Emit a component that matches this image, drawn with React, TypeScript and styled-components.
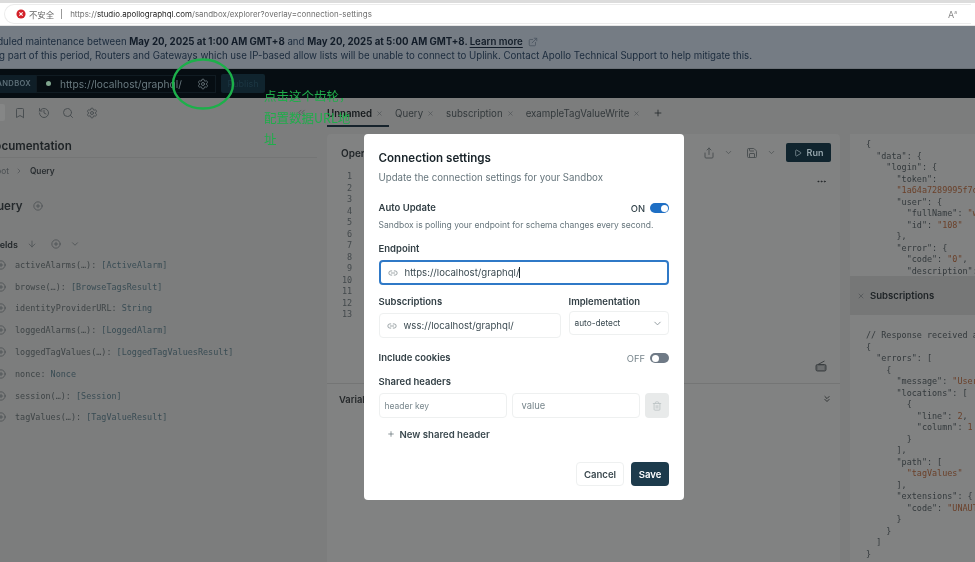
import React from "react";
import styled, { createGlobalStyle } from "styled-components";
import {
  ArrowDown,
  Bookmark,
  ChevronDown,
  ChevronRight,
  ChevronsDown,
  ChevronsLeft,
  CirclePlus,
  Ellipsis,
  ExternalLink,
  History,
  Link2,
  Play,
  Plus,
  Save,
  Search,
  Settings,
  Share,
  Trash2,
  X,
} from "lucide-react";

const GlobalStyle = createGlobalStyle`
  html, body {
    margin: 0;
    padding: 0;
    background: #7c7d7d;
    font-family: Inter, "Noto Sans CJK SC", sans-serif;
  }
  * { box-sizing: border-box; }
`;

const Page = styled.div`
  position: relative;
  width: 975px;
  height: 562px;
  overflow: hidden;
  display: flex;
  flex-direction: column;
  background: #7c7d7d;
  filter: blur(0.4px);
`;

/* browser chrome */
const BrowserBar = styled.div`
  height: 26px;
  flex: none;
  background: #ffffff;
  border-top: 3px solid #dcdcdc;
  padding: 1px 4px 0;
  border-bottom: 1px solid #e6e6e6;
`;

const UrlPill = styled.div`
  height: 20px;
  display: flex;
  align-items: center;
  padding: 0 0 0 11px;
  border: 1px solid #ececec;
  border-right: none;
  border-radius: 10px 0 0 10px;
  font-size: 7.95px;
  color: #6f6f6f;
`;

const Insecure = styled.span`
  color: #666;
  font-size: 8.4px;
  margin-left: 3px;
`;

const UrlDivider = styled.span`
  width: 1px;
  height: 10px;
  background: #999;
  margin: 0 8px 0 7px;
`;

const UrlHost = styled.span`
  color: #222;
`;

const ReadAloud = styled.span`
  margin-left: auto;
  margin-right: 14px;
  color: #888;
  font-size: 9px;
`;

const ReadAloudSmall = styled.sup`
  font-size: 5px;
`;

/* maintenance banner */
const Banner = styled.div`
  height: 43px;
  flex: none;
  background: #757c84;
  color: #1a2a3c;
  font-size: 9.7px;
  line-height: 14.2px;
  padding-top: 9px;
  white-space: nowrap;
  border-bottom: 1px solid #6a7076;
`;

const BannerLine = styled.div<{ $shift: number }>`
  display: flex;
  align-items: center;
  margin-left: ${(p) => p.$shift}px;
  b { font-weight: 700; color: #121c28; white-space: pre; }
  span { white-space: pre; }
  u { font-weight: 600; color: #121c28; text-underline-offset: 2px; }
  svg { color: #4c5660; margin-left: 5px; }
`;

/* dark header */
const DarkBar = styled.div`
  height: 29px;
  flex: none;
  background: #060d12;
  display: flex;
  align-items: center;
`;

const SandboxTag = styled.div`
  width: 36px;
  height: 18px;
  display: flex;
  align-items: center;
  justify-content: flex-end;
  overflow: hidden;
  padding-right: 5px;
  background: #0f1e27;
  color: #5d6f78;
  font-size: 7.6px;
  font-weight: 600;
  letter-spacing: 0.3px;
  white-space: nowrap;
`;

const EndpointBox = styled.div`
  width: 180px;
  height: 18px;
  display: flex;
  align-items: center;
  border: 1px solid #101b22;
  color: #6a7a80;
  font-size: 10.2px;
  padding-left: 9px;
  position: relative;
`;

const StatusDot = styled.span`
  width: 5px;
  height: 5px;
  border-radius: 50%;
  background: #7fa58e;
  margin-right: 9px;
`;

const GearSlot = styled.span`
  position: absolute;
  right: 6px;
  top: 2px;
  color: #5e6a70;
  display: flex;
`;

const PublishButton = styled.div`
  margin-left: 5px;
  width: 44px;
  height: 19px;
  background: #10242e;
  border-radius: 2px;
  color: #1c3743;
  font-size: 9px;
  display: flex;
  align-items: center;
  justify-content: center;
`;

/* workspace */
const Workspace = styled.div`
  flex: 1;
  min-height: 0;
  display: flex;
`;

const Sidebar = styled.div`
  width: 327px;
  flex: none;
  display: flex;
  flex-direction: column;
  color: #2e3436;
`;

const SideTools = styled.div`
  height: 29px;
  flex: none;
  display: flex;
  align-items: center;
  gap: 12px;
  padding-left: 14px;
  color: #4a4f52;
  position: relative;
`;

const ActiveTool = styled.span`
  position: absolute;
  left: 0;
  top: 6px;
  width: 5px;
  height: 17px;
  background: #858686;
  border-radius: 0 2px 2px 0;
`;

const CollapseIcon = styled.span`
  position: absolute;
  left: 296px;
  top: 9px;
  color: #55595b;
  display: flex;
`;

const DocsTitle = styled.div`
  height: 31px;
  margin-right: 10px;
  display: flex;
  align-items: center;
  padding-top: 7px;
  margin-left: -14px;
  font-size: 11.6px;
  font-weight: 600;
  color: #1d2225;
  border-bottom: 1px solid #747575;
`;

const Crumbs = styled.div`
  margin: 7px 0 0 -9px;
  height: 12px;
  display: flex;
  align-items: center;
  gap: 6.5px;
  font-size: 8.3px;
  color: #4a4f52;
  b { font-weight: 600; color: #2a2f32; }
`;

const QueryHead = styled.div`
  margin: 22px 0 0 -12px;
  height: 14px;
  display: flex;
  align-items: center;
  gap: 10px;
  font-size: 11.6px;
  font-weight: 600;
  color: #24292c;
  svg { color: #4d5254; }
`;

const FieldsHead = styled.div`
  margin: 25px 0 0 -8px;
  height: 12px;
  display: flex;
  align-items: center;
  gap: 9px;
  font-size: 9px;
  font-weight: 600;
  color: #24292c;
  svg { color: #4d5254; }
`;

const FieldsAdd = styled.span`
  display: flex;
  margin-left: 5px;
`;

const FieldList = styled.div`
  margin: 4px 0 0 -4px;
  display: flex;
  flex-direction: column;
`;

const FieldRow = styled.div`
  height: 21.8px;
  display: flex;
  align-items: center;
  gap: 9px;
  font-family: "DejaVu Sans Mono", monospace;
  font-size: 8.45px;
  color: #3e4446;
  white-space: pre;
  svg { color: #4d5254; flex: none; }
`;

const FieldType = styled.span`
  color: #394c54;
`;

const Center = styled.div`
  flex: 1;
  min-width: 0;
  display: flex;
  flex-direction: column;
`;

const Tabs = styled.div`
  height: 36px;
  flex: none;
  display: flex;
  align-items: flex-start;
  font-size: 9.7px;
  color: #33393c;
`;

const Tab = styled.div<{ $active?: boolean }>`
  height: 29px;
  display: flex;
  align-items: center;
  gap: 4px;
  padding: 4px 6px 0 ${(p) => (p.$active ? 0 : 6)}px;
  font-weight: ${(p) => (p.$active ? 600 : 400)};
  color: ${(p) => (p.$active ? "#15191c" : "#33393c")};
  border-bottom: 2px solid ${(p) => (p.$active ? "#16232c" : "transparent")};
  svg { color: #4a4f52; }
`;

const AddTab = styled.div`
  height: 29px;
  margin-left: 7px;
  display: flex;
  align-items: center;
  color: #25292c;
`;

const Panels = styled.div`
  flex: 1;
  min-height: 0;
  display: flex;
  gap: 10px;
`;

const Editor = styled.div`
  width: 513px;
  flex: none;
  background: #818282;
  display: flex;
  flex-direction: column;
  border-radius: 4px 4px 0 0;
`;

const EditorTop = styled.div`
  height: 250px;
  flex: none;
  display: flex;
  flex-direction: column;
  border-bottom: 1px solid #747575;
`;

const OpBar = styled.div`
  height: 37px;
  flex: none;
  display: flex;
  align-items: center;
  padding: 0 9px 0 14px;
  font-size: 10px;
  font-weight: 600;
  color: #1f2427;
`;

const OpTools = styled.div`
  margin-left: auto;
  display: flex;
  align-items: center;
  gap: 8.5px;
  color: #4c5153;
`;

const SaveSlot = styled.span`
  display: flex;
  margin-left: 5px;
`;

const RunButton = styled.div`
  margin-left: 2px;
  width: 45px;
  height: 19px;
  background: #10242e;
  border-radius: 2px;
  color: #94a4ab;
  font-size: 9px;
  font-weight: 600;
  display: flex;
  align-items: center;
  justify-content: center;
  gap: 5px;
`;

const EditorBody = styled.div`
  flex: 1;
  position: relative;
  padding-left: 15px;
`;

const LineNumbers = styled.div`
  width: 10px;
  font-family: "DejaVu Sans Mono", monospace;
  font-size: 8.45px;
  line-height: 11.5px;
  color: #43494c;
  text-align: right;
`;

const EdgeIcon = styled.span<{ $top: number; $right: number }>`
  position: absolute;
  top: ${(p) => p.$top}px;
  right: ${(p) => p.$right}px;
  color: #232628;
  display: flex;
`;

const VariablesBar = styled.div`
  position: relative;
  height: 30px;
  padding: 10px 0 0 12px;
  font-size: 9.4px;
  font-weight: 600;
  color: #26292b;
`;

const Response = styled.div`
  flex: 1;
  min-width: 0;
  display: flex;
  flex-direction: column;
  background: #818282;
`;

const CodeBlock = styled.pre<{ $height: number; $top: number }>`
  margin: 0;
  height: ${(p) => p.$height}px;
  flex: none;
  overflow: hidden;
  padding: ${(p) => p.$top}px 0 0 16px;
  font-family: "DejaVu Sans Mono", monospace;
  font-size: 8.45px;
  line-height: 11.5px;
  color: #33393c;
  em { font-style: normal; color: #6b4029; }
`;

const SubHeader = styled.div`
  height: 39px;
  flex: none;
  display: flex;
  align-items: center;
  gap: 5px;
  padding-left: 7px;
  background: #767777;
  font-size: 9.6px;
  font-weight: 600;
  color: #1e2326;
  svg { color: #4a4f52; }
`;

/* annotations over the screenshot */
const Ring = styled.svg`
  position: absolute;
  left: 170px;
  top: 57px;
`;

const Note = styled.div`
  position: absolute;
  left: 264px;
  top: 85px;
  width: 92px;
  font-size: 12.5px;
  line-height: 21.5px;
  color: #20ad4b;
  font-family: "Noto Sans CJK SC", sans-serif;
  word-break: break-all;
`;

/* dialog */
const Modal = styled.div`
  position: absolute;
  left: 364px;
  top: 134px;
  width: 320px;
  height: 366px;
  background: #ffffff;
  border-radius: 4px;
  padding: 17px 15px 0 14.5px;
  display: flex;
  flex-direction: column;
  color: #1d2a30;
`;

const ModalTitle = styled.div`
  font-size: 11.6px;
  font-weight: 600;
  line-height: 14px;
  color: #182329;
`;

const ModalSub = styled.div`
  margin-top: 6px;
  font-size: 9.7px;
  line-height: 14px;
  color: #66757c;
`;

const SpaceRow = styled.div<{ $mt: number }>`
  margin-top: ${(p) => p.$mt}px;
  height: 14px;
  display: flex;
  align-items: center;
  justify-content: space-between;
`;

const Label = styled.div<{ $mt?: number; $mb?: number }>`
  margin-top: ${(p) => p.$mt ?? 0}px;
  margin-bottom: ${(p) => p.$mb ?? 0}px;
  font-size: 9.5px;
  line-height: 12px;
  font-weight: 600;
  color: #323f45;
`;

const HelpText = styled.div`
  margin-top: 4px;
  font-size: 8.5px;
  line-height: 12px;
  color: #66757c;
  white-space: nowrap;
`;

const ToggleWrap = styled.div`
  display: flex;
  align-items: center;
  gap: 5px;
`;

const ToggleText = styled.span<{ $on: boolean }>`
  font-size: 9.4px;
  font-weight: ${(p) => (p.$on ? 500 : 400)};
  color: ${(p) => (p.$on ? "#33434b" : "#77858c")};
`;

const Toggle = styled.span<{ $on: boolean }>`
  width: 19px;
  height: 10px;
  border-radius: 5px;
  background: ${(p) => (p.$on ? "#1f6fc4" : "#6f7a86")};
  position: relative;
  &::after {
    content: "";
    position: absolute;
    top: 1.5px;
    ${(p) => (p.$on ? "right: 1.5px;" : "left: 1.5px;")}
    width: 7px;
    height: 7px;
    border-radius: 50%;
    background: #fff;
  }
`;

const Field = styled.div<{ $focus?: boolean; $w: string; $pad?: number; $h?: number }>`
  width: ${(p) => p.$w};
  height: ${(p) => p.$h ?? 25}px;
  display: flex;
  align-items: center;
  gap: 7px;
  flex: none;
  padding: 0 ${(p) => p.$pad ?? 7}px;
  background: #fff;
  border: ${(p) => (p.$focus ? "2px solid #2f79c7" : "1px solid #eef0f0")};
  border-radius: 4px;
  font-size: 9.6px;
  color: #3b4a51;
  white-space: nowrap;
  svg { color: #8b9599; flex: none; }
`;

const Caret = styled.span`
  width: 1px;
  height: 11px;
  background: #1d2a30;
  margin-left: -7px;
`;

const Placeholder = styled.span<{ $size: number }>`
  color: #78868c;
  font-size: ${(p) => p.$size}px;
`;

const TwoCols = styled.div`
  margin-top: 11px;
  display: flex;
  gap: 8px;
`;

const Col = styled.div`
  display: flex;
  flex-direction: column;
  gap: 5px;
`;

const ImplCol = styled(Col)`
  gap: 3px;
`;

const SelectText = styled.span`
  flex: 1;
  color: #3b4a51;
  font-size: 8.3px;
`;

const HeaderRow = styled.div`
  margin-top: 5px;
  display: flex;
  gap: 5px;
`;

const TrashButton = styled.div`
  width: 24px;
  height: 25px;
  background: #e8eaea;
  border-radius: 4px;
  display: flex;
  align-items: center;
  justify-content: center;
  color: #bcc3c4;
`;

const NewHeader = styled.div`
  margin-top: 10px;
  padding-left: 8px;
  height: 12px;
  display: flex;
  align-items: center;
  gap: 5px;
  font-size: 9.6px;
  font-weight: 600;
  color: #3b494f;
  svg { color: #56646a; }
`;

const Footer = styled.div`
  margin-top: 22px;
  display: flex;
  justify-content: flex-end;
  gap: 7px;
`;

const FooterButton = styled.div<{ $primary?: boolean }>`
  width: ${(p) => (p.$primary ? 38 : 48)}px;
  height: 24px;
  display: flex;
  align-items: center;
  justify-content: center;
  border-radius: 4px;
  font-size: 9.6px;
  font-weight: 600;
  background: ${(p) => (p.$primary ? "#1d3b4c" : "#fff")};
  color: ${(p) => (p.$primary ? "#ffffff" : "#3b494f")};
  border: ${(p) => (p.$primary ? "none" : "1px solid #eef0f0")};
`;

const fields: [string, string][] = [
  ["activeAlarms(…): ", "[ActiveAlarm]"],
  ["browse(…): ", "[BrowseTagsResult]"],
  ["identityProviderURL: ", "String"],
  ["loggedAlarms(…): ", "[LoggedAlarm]"],
  ["loggedTagValues(…): ", "[LoggedTagValuesResult]"],
  ["nonce: ", "Nonce"],
  ["session(…): ", "[Session]"],
  ["tagValues(…): ", "[TagValueResult]"],
];

const lineNumbers = Array.from({ length: 13 }, (_, i) => i + 1);

// little radio set with an antenna, lucide has nothing this shape
function RadioIcon() {
  return (
    <svg width="12" height="12" viewBox="0 0 12 12" fill="none" stroke="#3a3e40" strokeWidth="1">
      <rect x="1" y="4.5" width="10" height="6.5" rx="1.5" fill="#5c5f60" />
      <path d="M3 4.5L9.5 1" />
      <path d="M2.8 7h6.4M2.8 9h6.4" stroke="#8a8c8c" strokeWidth="0.7" />
    </svg>
  );
}

export default function App() {
  return (
    <Page>
      <GlobalStyle />
      <BrowserBar>
        <UrlPill>
          <svg width="10" height="10" viewBox="0 0 11 11">
            <circle cx="5.5" cy="5.5" r="5" fill="#d3222a" />
            <path d="M3.7 3.7l3.6 3.6M7.3 3.7l-3.6 3.6" stroke="#fff" strokeWidth="1.2" />
          </svg>
          <Insecure>不安全</Insecure>
          <UrlDivider />
          <span>https://</span>
          <UrlHost>studio.apollographql.com</UrlHost>
          <span>/sandbox/explorer?overlay=connection-settings</span>
          <ReadAloud>
            A<ReadAloudSmall>a</ReadAloudSmall>
          </ReadAloud>
        </UrlPill>
      </BrowserBar>

      <Banner>
        <BannerLine $shift={-26}>
          <span>Scheduled maintenance between </span>
          <b>May 20, 2025 at 1:00 AM GMT+8</b>
          <span> and </span>
          <b>May 20, 2025 at 5:00 AM GMT+8. </b>
          <u>Learn more</u>
          <ExternalLink size={10} />
        </BannerLine>
        <BannerLine $shift={-1}>
          <span>g part of this period, Routers and Gateways which use IP-based allow lists will be unable to connect to Uplink. Contact Apollo Technical Support to help mitigate this.</span>
        </BannerLine>
      </Banner>

      <DarkBar>
        <SandboxTag>ANDBOX</SandboxTag>
        <EndpointBox>
          <StatusDot />
          https://localhost/graphql/
          <GearSlot>
            <Settings size={12} />
          </GearSlot>
        </EndpointBox>
        <PublishButton>Publish</PublishButton>
      </DarkBar>

      <Workspace>
        <Sidebar>
          <SideTools>
            <ActiveTool />
            <Bookmark size={12} />
            <History size={12} />
            <Search size={12} />
            <Settings size={12} />
            <CollapseIcon>
              <ChevronsLeft size={11} />
            </CollapseIcon>
          </SideTools>
          <DocsTitle>Documentation</DocsTitle>
          <Crumbs>
            <span>Root</span>
            <ChevronRight size={8} />
            <b>Query</b>
          </Crumbs>
          <QueryHead>
            Query
            <CirclePlus size={10} />
          </QueryHead>
          <FieldsHead>
            Fields
            <ArrowDown size={10} />
            <FieldsAdd>
              <CirclePlus size={10} />
            </FieldsAdd>
            <ChevronDown size={10} />
          </FieldsHead>
          <FieldList>
            {fields.map(([name, type]) => (
              <FieldRow key={name}>
                <CirclePlus size={10} />
                <span>
                  {name}
                  <FieldType>{type}</FieldType>
                </span>
              </FieldRow>
            ))}
          </FieldList>
        </Sidebar>

        <Center>
          <Tabs>
            <Tab $active>
              Unnamed <X size={7} />
            </Tab>
            <Tab>
              Query <X size={7} />
            </Tab>
            <Tab>
              subscription <X size={7} />
            </Tab>
            <Tab>
              exampleTagValueWrite <X size={7} />
            </Tab>
            <AddTab>
              <Plus size={10} />
            </AddTab>
          </Tabs>
          <Panels>
            <Editor>
              <EditorTop>
                <OpBar>
                  Operation
                  <OpTools>
                    <Share size={12} />
                    <ChevronDown size={9} />
                    <SaveSlot>
                      <Save size={12} />
                    </SaveSlot>
                    <ChevronDown size={9} />
                    <RunButton>
                      <Play size={8} /> Run
                    </RunButton>
                  </OpTools>
                </OpBar>
                <EditorBody>
                  <LineNumbers>
                    {lineNumbers.map((n) => (
                      <div key={n}>{n}</div>
                    ))}
                  </LineNumbers>
                  <EdgeIcon $top={5} $right={13}>
                    <Ellipsis size={11} />
                  </EdgeIcon>
                  <EdgeIcon $top={189} $right={13}>
                    <RadioIcon />
                  </EdgeIcon>
                </EditorBody>
              </EditorTop>
              <VariablesBar>
                Variables
                <EdgeIcon $top={10} $right={8}>
                  <ChevronsDown size={10} />
                </EdgeIcon>
              </VariablesBar>
            </Editor>
            <Response>
              <CodeBlock $height={142} $top={5}>
                {`{
  "data": {
    "login": {
      "token":
      `}
                <em>"1a64a7289995f7d</em>
                {`
      "user": {
        "fullName": `}
                <em>"w</em>
                {`
        "id": `}
                <em>"108"</em>
                {`
      },
      "error": {
        "code": `}
                <em>"0"</em>
                {`,
        "description":`}
              </CodeBlock>
              <SubHeader>
                <X size={8} />
                Subscriptions
              </SubHeader>
              <CodeBlock $height={247} $top={15}>
                {`// Response received a
{
  "errors": [
    {
      "message": `}
                <em>"User</em>
                {`
      "locations": [
        {
          "line": `}
                <em>2</em>
                {`,
          "column": `}
                <em>1</em>
                {`
        }
      ],
      "path": [
        `}
                <em>"tagValues"</em>
                {`
      ],
      "extensions": {
        "code": `}
                <em>"UNAUT</em>
                {`
      }
    }
  ]
}`}
              </CodeBlock>
            </Response>
          </Panels>
        </Center>
      </Workspace>

      <Ring width="66" height="54" viewBox="0 0 66 54">
        <ellipse cx="33" cy="27" rx="30" ry="24.5" fill="none" stroke="#1cb04a" strokeWidth="2.4" />
      </Ring>
      <Note>点击这个齿轮，配置数据URL地址</Note>

      <Modal>
        <ModalTitle>Connection settings</ModalTitle>
        <ModalSub>Update the connection settings for your Sandbox</ModalSub>
        <SpaceRow $mt={16}>
          <Label>Auto Update</Label>
          <ToggleWrap>
            <ToggleText $on>ON</ToggleText>
            <Toggle $on />
          </ToggleWrap>
        </SpaceRow>
        <HelpText>Sandbox is polling your endpoint for schema changes every second.</HelpText>
        <Label $mt={12} $mb={5}>
          Endpoint
        </Label>
        <Field $focus $w="290px">
          <Link2 size={10} />
          https://localhost/graphql/
          <Caret />
        </Field>
        <TwoCols>
          <Col>
            <Label>Subscriptions</Label>
            <Field $w="182px">
              <Link2 size={10} />
              wss://localhost/graphql/
            </Field>
          </Col>
          <ImplCol>
            <Label>Implementation</Label>
            <Field $w="100px" $pad={5} $h={24}>
              <SelectText>auto-detect</SelectText>
              <ChevronDown size={11} />
            </Field>
          </ImplCol>
        </TwoCols>
        <SpaceRow $mt={13}>
          <Label>Include cookies</Label>
          <ToggleWrap>
            <ToggleText $on={false}>OFF</ToggleText>
            <Toggle $on={false} />
          </ToggleWrap>
        </SpaceRow>
        <Label $mt={11}>Shared headers</Label>
        <HeaderRow>
          <Field $w="128px" $pad={5}>
            <Placeholder $size={8.5}>header key</Placeholder>
          </Field>
          <Field $w="128px" $pad={9}>
            <Placeholder $size={9.4}>value</Placeholder>
          </Field>
          <TrashButton>
            <Trash2 size={10} />
          </TrashButton>
        </HeaderRow>
        <NewHeader>
          <Plus size={8} />
          New shared header
        </NewHeader>
        <Footer>
          <FooterButton>Cancel</FooterButton>
          <FooterButton $primary>Save</FooterButton>
        </Footer>
      </Modal>
    </Page>
  );
}
